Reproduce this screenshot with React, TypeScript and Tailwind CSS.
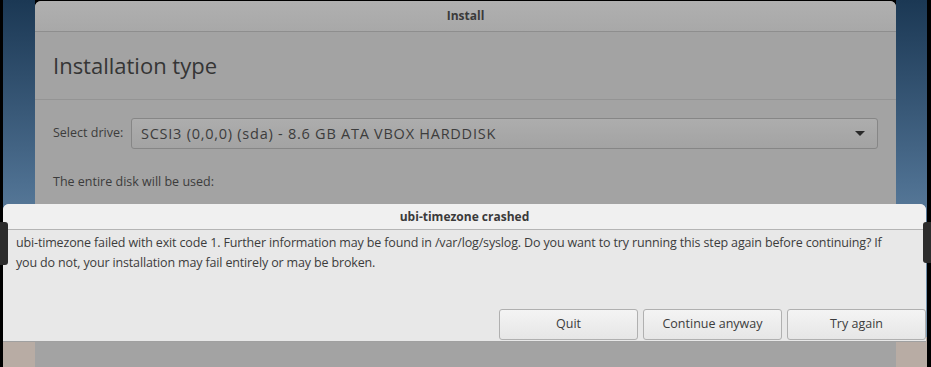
import React from "react";

const font = { fontFamily: '"Open Sans", "DejaVu Sans", sans-serif' };

function Desktop({ side }: { side: "left" | "right" }) {
    return (
        <div className={`relative h-full ${side === "left" ? "w-[32px]" : "w-[31px]"} bg-gradient-to-b from-[#1b3854] via-[#4d6f90] to-[#8eaac0]`}>
            <div className="absolute bottom-0 left-0 w-full h-[30px] bg-[#b8aca4]" />
        </div>
    );
}

export default function App() {
    return (
        <div className="relative w-[931px] h-[367px] overflow-hidden bg-black text-[#3c3c3c]" style={font}>
            <div className="flex h-full">
                <div className="w-[3px] bg-black" />
                <Desktop side="left" />

                {/* installer window */}
                <div className="flex flex-col w-[861px] h-full mt-[1px] rounded-t-[6px] bg-[#a3a3a3] overflow-hidden">
                    <div className="h-[31px] flex items-center justify-center bg-gradient-to-b from-[#b0b0b0] to-[#a8a8a8] border-b border-[#8e8e8e] text-[12px] font-bold text-[#3a3a3a]">
                        Install
                    </div>
                    <div className="h-[68px] flex items-center px-[18px] border-b border-[#949494] text-[22px] text-[#353535]">
                        Installation type
                    </div>
                    <div className="flex items-center px-[18px] mt-[18px]">
                        <span className="shrink-0 whitespace-nowrap w-[78px] text-[12.5px]">Select drive:</span>
                        <div className="flex items-center justify-between w-[747px] h-[31px] pl-[9px] pr-[8px] rounded-[3px] border border-[#868686] bg-gradient-to-b from-[#adadad] to-[#a3a3a3] text-[14.5px] tracking-[0.75px]">
                            <span className="whitespace-nowrap">SCSI3 (0,0,0) (sda) - 8.6 GB ATA VBOX HARDDISK</span>
                            <span className="w-0 h-0 mr-[4px] border-l-[5px] border-r-[5px] border-t-[5px] border-l-transparent border-r-transparent border-t-[#2a2a2a]" />
                        </div>
                    </div>
                    <div className="px-[18px] mt-[24px] text-[12.5px]">The entire disk will be used:</div>
                </div>

                <Desktop side="right" />
                <div className="w-[4px] bg-black" />
            </div>

            {/* crash dialog over the installer */}
            <div className="absolute left-[3px] top-[204px] w-[923px] h-[138px] flex flex-col rounded-t-[6px] bg-[#e8e8e8] border-b border-[#a0a0a0]">
                <div className="h-[26px] flex items-center justify-center rounded-t-[6px] bg-[#f0f0f0] border-b border-[#b4b4b4] text-[12px] font-bold text-[#3a3a3a]">
                    ubi-timezone crashed
                </div>
                <p className="px-[13px] pt-[3px] text-[12.5px] leading-[20px] tracking-[-0.15px] whitespace-nowrap text-[#3c3c3c]">
                    ubi-timezone failed with exit code 1. Further information may be found in /var/log/syslog. Do you want to try running this step again before continuing? If<br />
                    you do not, your installation may fail entirely or may be broken.
                </p>
                <div className="flex justify-end gap-[5px] mt-auto mb-[1px]">
                    {["Quit", "Continue anyway", "Try again"].map((b) => (
                        <button key={b} className="w-[139px] h-[31px] rounded-[3px] border border-[#b0b0b0] bg-gradient-to-b from-[#f4f4f4] to-[#e6e6e6] text-[12.5px] text-[#3c3c3c]">
                            {b}
                        </button>
                    ))}
                </div>
            </div>

            {/* window handles */}
            <div className="absolute left-0 top-[222px] w-[8px] h-[43px] rounded-r-[3px] bg-[#2c2c2c]" />
            <div className="absolute right-0 top-[222px] w-[8px] h-[41px] rounded-l-[3px] bg-[#2c2c2c]" />
        </div>
    );
}
